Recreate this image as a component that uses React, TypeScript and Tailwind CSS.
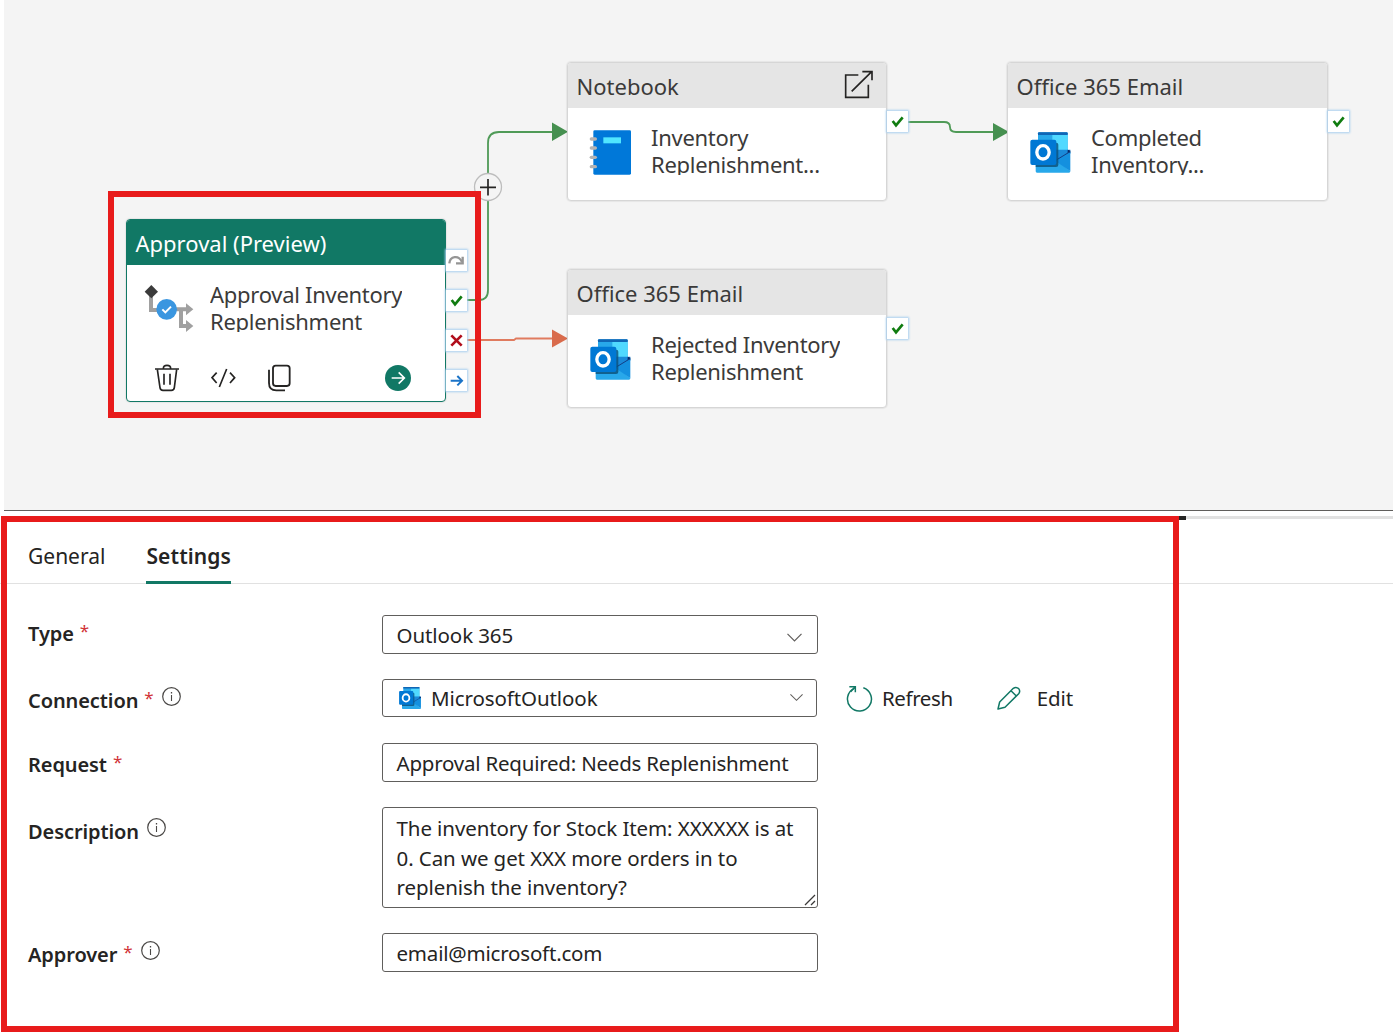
import type { ReactNode } from 'react';
import clsx from 'clsx';

// ─── Activity icons ───
function OutlookIcon({ className, viewBox = '0 0 156 156' }: { className: string; viewBox?: string }) {
  return (
    <svg className={className} viewBox={viewBox} fill="none">
      <path d="M42 19h83a3 3 0 0 1 3 3v55H39V22a3 3 0 0 1 3-3z" fill="#28a8ea" />
      <path d="M82 27h46v46H82z" fill="#50d9ff" />
      <path d="M42 19h83a3 3 0 0 1 3 3v5H39v-5a3 3 0 0 1 3-3z" fill="#1066b5" />
      <path d="M82 71h54v12L96 104H82z" fill="#1a8ad9" />
      <path d="M128 71l8 3v6l-8 3z" fill="#0a2767" />
      <path d="M32 100h60l44 36a4 4 0 0 1-4 4H36a4 4 0 0 1-4-4z" fill="#28a8ea" />
      <path d="M136 78v58L90 104z" fill="#1490df" />
      <path d="M135 77L94 102" stroke="#123f86" strokeWidth="3" />
      <path d="M32 50h62a6 6 0 0 1 6 6v60a7 7 0 0 1-7 7H32z" fill="#0b4f78" opacity="0.8" />
      <rect x="16" y="41" width="78" height="76" rx="6" fill="#0078d4" />
      <ellipse cx="54" cy="79" rx="18.500" ry="20" stroke="#fff" strokeWidth="10" />
    </svg>
  );
}

function NotebookIcon() {
  return (
    <svg className="h-[52px] w-[52px]" viewBox="0 0 156 156">
      <rect x="25" y="13" width="113" height="133" rx="4" fill="#0078d9" />
      <rect x="55" y="34" width="53" height="18" fill="#50e6ff" />
      {[39, 66, 94, 122].map((y) => (
        <rect key={y} x="14" y={y - 5} width="22" height="10" rx="5" fill="#b3b3b3" />
      ))}
    </svg>
  );
}

function ApprovalIcon() {
  return (
    <svg className="h-[52px] w-[52px]" viewBox="0 0 156 156" fill="none">
      <path d="M21 38v43h25M96 79h32M111 79v50h18" stroke="#a0a0a0" strokeWidth="12" />
      <path d="M126 61l22 18-22 18zM126 111l22 18-22 18z" fill="#a0a0a0" />
      <path d="M22 6l20 20-20 20L2 26z" fill="#3b3b3b" />
      <circle cx="68" cy="79" r="31" fill="#3a96e0" />
      <path d="M55 79l9 9 17-17" stroke="#fff" strokeWidth="6" />
    </svg>
  );
}

function OpenIcon() {
  return (
    <svg className="mb-[3px] h-[30px] w-[30px]" viewBox="0 0 90 90" fill="none" stroke="#252423" strokeWidth="5">
      <path d="M46 18H8v67h68V47" />
      <path d="M26 67L86 8M58 8h29v26" />
    </svg>
  );
}

// ─── Small controls ───
type Outcome = 'skip' | 'success' | 'fail' | 'complete';

function OutcomeBadge({ kind }: { kind: Outcome }) {
  return (
    <div className="flex h-[21px] w-[21px] items-center justify-center bg-white shadow-[0_0_2px_1px_#a9cfef]">
      <svg className="h-[21px] w-[21px]" viewBox="0 0 63 63" fill="none" strokeWidth="6">
        {kind === 'skip' && (
          <g stroke="#959595" strokeWidth="7">
            <path d="M10 40c2-22 28-26 38-4" />
            <path d="M50 20v20H30" />
          </g>
        )}
        {kind === 'success' && <path d="M17 30l10 13 20-24" stroke="#107c10" strokeWidth="8" />}
        {kind === 'fail' && <path d="M16 16l31 31M47 16L16 47" stroke="#b10e1c" strokeWidth="8" />}
        {kind === 'complete' && <path d="M14 32h34M34 18l14 14-14 14" stroke="#1a73c7" strokeWidth="6" />}
      </svg>
    </div>
  );
}

function InfoIcon() {
  return (
    <svg className="mt-px h-[19px] w-[19px]" viewBox="0 0 19 19" fill="none" stroke="#4a4846">
      <circle cx="9.500" cy="9.500" r="8.800" strokeWidth="1.200" />
      <path d="M9.500 8v6" strokeWidth="1.100" />
      <path d="M9.500 5v1.500" strokeWidth="1.300" />
    </svg>
  );
}

function Chevron({ className }: { className?: string }) {
  return (
    <svg className={clsx('h-[9px]', className)} viewBox="0 0 15 9" fill="none" stroke="#605e5c" strokeWidth="1.200">
      <path d="M.5.8l7 7 7-7" />
    </svg>
  );
}

// ─── Pipeline activity node ───
function ActivityNode({
  title,
  lines,
  icon,
  className,
  outcomes,
  action,
  selected,
}: {
  title: string;
  lines: string[];
  icon: ReactNode;
  className: string;
  outcomes: Outcome[];
  action?: ReactNode;
  selected?: boolean;
}) {
  return (
    <div className={clsx('absolute', className)}>
      <div
        className={clsx(
          'h-full w-full overflow-hidden rounded-[4px] border bg-white shadow-[0_0_1px_1px_rgba(0,0,0,0.06)]',
          selected ? 'border-[#117865]' : 'border-[#d6d6d6]'
        )}
      >
        <div
          className={clsx(
            'flex h-[45px] items-center justify-between pr-[13px] pl-[8.5px] text-[22px]',
            selected ? 'bg-[#117865] text-white' : 'bg-[#e5e5e5] text-[#3b3a39]'
          )}
        >
          <span className="pt-px leading-[42px]">{title}</span>
          {action}
        </div>
        <div className="flex pl-[17px]">
          <div className="mt-[18px] w-[66px] shrink-0">{icon}</div>
          <div className="mt-[16px] h-[51px] overflow-hidden text-[22px] leading-[27px] tracking-[-0.28px] text-[#3b3a39]">
            {lines.map((line) => (
              <div key={line} className="whitespace-nowrap">{line}</div>
            ))}
          </div>
        </div>
        {selected && <NodeToolbar />}
      </div>
      <div className={clsx('absolute left-full flex flex-col gap-[19px]', selected ? 'top-[31px]' : 'top-[49px]')}>
        {outcomes.map((kind) => (
          <OutcomeBadge key={kind} kind={kind} />
        ))}
      </div>
    </div>
  );
}

function NodeToolbar() {
  return (
    <div className="mt-[29px] flex h-[28px] items-center pl-[28px]">
      <svg className="h-[28px] w-[24px]" viewBox="0 0 72 84" fill="none" stroke="#252423" strokeWidth="5">
        <path d="M0 15h72M25 14c0-13 22-13 22 0" />
        <path d="M7 16l8 55q1 8 9 8h25q8 0 9-8l7-55M27 29v33M45 29v33" />
      </svg>
      <svg className="ml-[32px] h-[28px] w-[25px]" viewBox="0 0 75 84" fill="none" stroke="#252423" strokeWidth="5">
        <path d="M17 26L3 41l14 16M57 26l14 15-14 16M47 15L25 69" />
      </svg>
      <svg className="ml-[31px] h-[28px] w-[24px]" viewBox="0 0 72 84" fill="none" stroke="#252423" strokeWidth="5.500">
        <rect x="18" y="5" width="50" height="61" rx="8" />
        <path d="M6 17v40q0 22 22 22h26" />
      </svg>
      <svg className="ml-[94px] h-[26px] w-[26px]" viewBox="0 0 78 78" fill="none">
        <circle cx="39" cy="39" r="39" fill="#117865" />
        <path d="M20 39h36M41 22l17 17-17 17" stroke="#fff" strokeWidth="5" />
      </svg>
    </div>
  );
}

function Connectors() {
  return (
    <svg className="absolute top-0 left-0 h-[510px] w-[1389px]" viewBox="4 0 1389 510" fill="none">
      <g stroke="#4f9a57" strokeWidth="1.800">
        <path d="M467 300h12q9 0 9-10V143q0-11 11-11h55" />
        <path d="M908 122h36q6 0 6 5t6 5h40" />
      </g>
      <path d="M467 340h47l2-1.500h40" stroke="#e07b5f" strokeWidth="1.800" />
      <path d="M552 122.500l16 9.300-16 9.200zM993 123l16 9-16 9z" fill="#469050" />
      <path d="M552 329.500l16 9-16 9z" fill="#d96b4c" />
      <circle cx="488" cy="187" r="13.500" fill="#f4f4f4" stroke="#bdbdbd" strokeWidth="1.300" />
      <path d="M480 187.300h16M488 179v16.500" stroke="#252423" strokeWidth="1.700" />
    </svg>
  );
}

// ─── Settings form ───
function FieldRow({
  label,
  required,
  info,
  className,
  labelClassName = 'pt-[7px]',
  children,
}: {
  label: string;
  required?: boolean;
  info?: boolean;
  className?: string;
  labelClassName?: string;
  children: ReactNode;
}) {
  return (
    <div className={clsx('flex', className)}>
      <div className={clsx('flex w-[354px] shrink-0 items-start text-[20px] leading-[30px] font-semibold', labelClassName)}>
        <span>{label}</span>
        {required && (
          <span className="ml-[6px] w-[10px] text-[17px] leading-[24px] font-normal text-[#d13438]">*</span>
        )}
        {info && <span className="ml-[8px]"><InfoIcon /></span>}
      </div>
      {children}
    </div>
  );
}

const box = 'w-[436px] rounded-[3px] border border-[#605e5c] bg-white pl-[13.5px]';

export default function App() {
  return (
    <div className="relative h-[1032px] w-[1393px] overflow-hidden bg-white font-['Noto_Sans',sans-serif] text-[#252423]">
      {/* Pipeline canvas */}
      <div className="relative ml-[4px] h-[511px] border-b border-[#605e5c] bg-[#f4f4f4]">
        <Connectors />
        <ActivityNode
          selected
          className="top-[219px] left-[122px] h-[183px] w-[320px]"
          title="Approval (Preview)"
          lines={['Approval Inventory', 'Replenishment']}
          icon={<ApprovalIcon />}
          outcomes={['skip', 'success', 'fail', 'complete']}
        />
        <ActivityNode
          className="top-[62px] left-[563px] h-[139px] w-[320px]"
          title="Notebook"
          lines={['Inventory', 'Replenishment...']}
          icon={<NotebookIcon />}
          outcomes={['success']}
          action={<OpenIcon />}
        />
        <ActivityNode
          className="top-[62px] left-[1003px] h-[139px] w-[321px]"
          title="Office 365 Email"
          lines={['Completed', 'Inventory...']}
          icon={<OutlookIcon className="h-[52px] w-[52px]" />}
          outcomes={['success']}
        />
        <ActivityNode
          className="top-[269px] left-[563px] h-[139px] w-[320px]"
          title="Office 365 Email"
          lines={['Rejected Inventory', 'Replenishment']}
          icon={<OutlookIcon className="h-[52px] w-[52px]" />}
          outcomes={['success']}
        />
        <div className="absolute top-[191px] left-[104px] h-[227px] w-[373px] border-[6px] border-[#e81b1b]" />
      </div>

      {/* Properties panel */}
      <div className="mt-[5px] flex h-[4px] items-start justify-end">
        <div className="h-[4px] w-[7px] bg-[#252423]" />
        <div className="h-[3px] w-[207px] bg-[#e1e1e1]" />
      </div>
      <div className="flex h-[64px] gap-[41px] border-b border-[#e1e1e1] pl-[28px] text-[21px] leading-[72px]">
        <div>General</div>
        <div className="h-[64px] border-b-[3px] border-[#117865] font-semibold tracking-[0.12px]">Settings</div>
      </div>

      <div className="pt-[31px] pl-[28px] text-[20.5px] tracking-[-0.09px]">
        <FieldRow label="Type" required labelClassName="pt-[4px]">
          <div className={clsx(box, 'flex h-[39px] items-center justify-between pr-[15px]')}>
            <span className="pt-[2px]">Outlook 365</span>
            <Chevron className="mt-[6px] w-[15px]" />
          </div>
        </FieldRow>
        <FieldRow label="Connection" required info className="mt-[25px]">
          <div className="flex h-[38px] w-[435px] items-center rounded-[3px] border border-[#605e5c] pr-[13px] pl-[16px]">
            <OutlookIcon className="h-[22px] w-[22px]" viewBox="16 19 120 121" />
            <span className="ml-[10px]">MicrosoftOutlook</span>
            <Chevron className="mb-[2px] ml-auto w-[13px]" />
          </div>
          <button className="ml-[29px] flex h-[38px] items-center tracking-[-0.4px]">
            <svg className="h-[27px] w-[27px]" viewBox="0 0 81 81" fill="none" stroke="#117865" strokeWidth="4.500">
              <path d="M24 10A36 36 0 1 0 52 8" />
              <path d="M10 5h18v17M28 5L14 20" />
            </svg>
            <span className="ml-[9px]">Refresh</span>
          </button>
          <button className="ml-[44px] flex h-[38px] items-center">
            <svg className="h-[24px] w-[24px]" viewBox="0 0 72 72" fill="none" stroke="#117865" strokeWidth="4.500">
              <path d="M3 69l5-21L49 7q8-6 16 1 6 8 0 15L24 64zM42 14l16 16" strokeLinejoin="round" />
            </svg>
            <span className="ml-[16px]">Edit</span>
          </button>
        </FieldRow>
        <FieldRow label="Request" required className="mt-[26px]">
          <div className={clsx(box, 'h-[39px] leading-[39px] tracking-[-0.22px]')}>Approval Required: Needs Replenishment</div>
        </FieldRow>
        <FieldRow label="Description" info className="mt-[25px]" labelClassName="pt-[10px]">
          <div className={clsx(box, 'relative h-[101px] pt-[6px] leading-[29.5px]')}>
            <div>The inventory for Stock Item: XXXXXX is at</div>
            <div>0. Can we get XXX more orders in to</div>
            <div>replenish the inventory?</div>
            <svg className="absolute right-[1px] bottom-[1px] h-[12px] w-[12px]" viewBox="0 0 12 12" stroke="#3b3a39" strokeWidth="1.300">
              <path d="M1 11L11 1M7 11l4-4" />
            </svg>
          </div>
        </FieldRow>
        <FieldRow label="Approver" required info className="mt-[25px]">
          <div className={clsx(box, 'h-[39px] leading-[39px] tracking-[-0.2px]')}>email@microsoft.com</div>
        </FieldRow>
      </div>

      {/* Highlight around the settings form */}
      <div className="pointer-events-none absolute top-[516px] left-[1px] h-[516px] w-[1178px] border-[6px] border-[#e81b1b]" />
    </div>
  );
}
